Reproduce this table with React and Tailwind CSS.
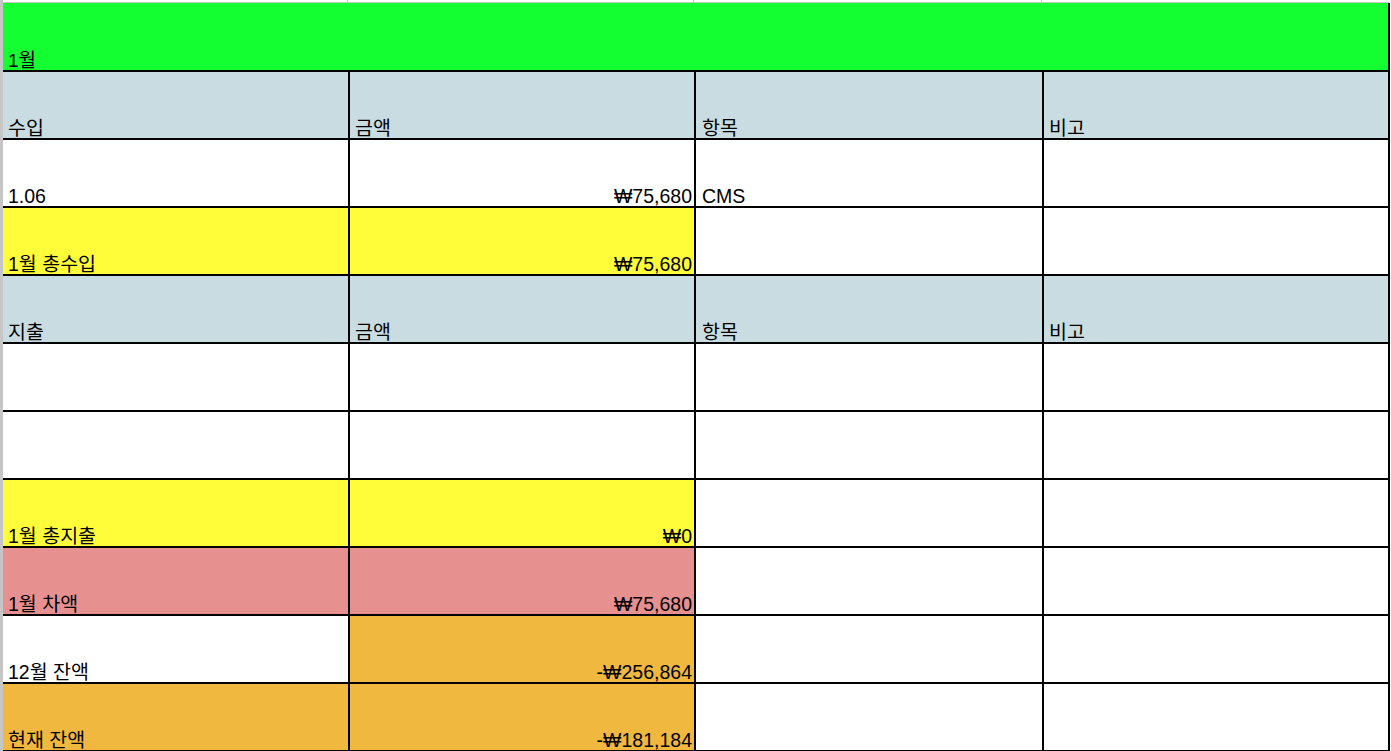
import React from "react";

const font = { fontFamily: '"Liberation Sans", "Noto Sans CJK KR", sans-serif' };

const rows = [
  { cells: ["수입", "금액", "항목", "비고"], bg: ["bg-[#c9dce1]", "bg-[#c9dce1]", "bg-[#c9dce1]", "bg-[#c9dce1]"] },
  { cells: ["1.06", "₩75,680", "CMS", ""], bg: ["bg-white", "bg-white", "bg-white", "bg-white"], right: [1] },
  { cells: ["1월 총수입", "₩75,680", "", ""], bg: ["bg-[#fffd3a]", "bg-[#fffd3a]", "bg-white", "bg-white"], right: [1] },
  { cells: ["지출", "금액", "항목", "비고"], bg: ["bg-[#c9dce1]", "bg-[#c9dce1]", "bg-[#c9dce1]", "bg-[#c9dce1]"] },
  { cells: ["", "", "", ""], bg: ["bg-white", "bg-white", "bg-white", "bg-white"] },
  { cells: ["", "", "", ""], bg: ["bg-white", "bg-white", "bg-white", "bg-white"] },
  { cells: ["1월 총지출", "₩0", "", ""], bg: ["bg-[#fffd3a]", "bg-[#fffd3a]", "bg-white", "bg-white"], right: [1] },
  { cells: ["1월 차액", "₩75,680", "", ""], bg: ["bg-[#e69090]", "bg-[#e69090]", "bg-white", "bg-white"], right: [1] },
  { cells: ["12월 잔액", "-₩256,864", "", ""], bg: ["bg-white", "bg-[#f0b83e]", "bg-white", "bg-white"], right: [1] },
  { cells: ["현재 잔액", "-₩181,184", "", ""], bg: ["bg-[#f0b83e]", "bg-[#f0b83e]", "bg-white", "bg-white"], right: [1] },
];

export default function App() {
  return (
    <div className="w-[1391px] h-[751px] bg-white overflow-hidden flex text-black" style={font}>
      <div className="w-[3px] h-full bg-[#c6c6c6] shrink-0" />
      <div className="flex flex-col w-[1388px] shrink-0">
        <div className="h-[2px] shrink-0 grid grid-cols-[345px_346px_348px_346px_3px]">
          <div className="border-r border-[#c6c6c6]" />
          <div className="border-r border-[#c6c6c6]" />
          <div className="border-r border-[#c6c6c6]" />
          <div />
          <div />
        </div>
        <div className="h-[1px] shrink-0 w-[1386px] bg-[#c6c6c6]" />
        <div className="w-[1387px] h-[69px] shrink-0 bg-[#13ff32] border-r-2 border-b-2 border-black flex items-end pl-[5px] text-[19px] leading-none">
          1월
        </div>
        {rows.map((r, i) => (
          <div key={i} className="grid grid-cols-[347px_346px_348px_346px] w-[1387px] h-[68px] shrink-0">
            {r.cells.map((c, j) => (
              <div
                key={j}
                className={`${r.bg[j]} border-r-2 border-b-2 border-black flex items-end text-[19.5px] leading-none whitespace-nowrap ${
                  r.right && r.right.includes(j) ? "justify-end pr-[2px]" : j === 2 ? "pl-[6px]" : "pl-[5px]"
                }`}
              >
                {c}
              </div>
            ))}
          </div>
        ))}
      </div>
    </div>
  );
}
